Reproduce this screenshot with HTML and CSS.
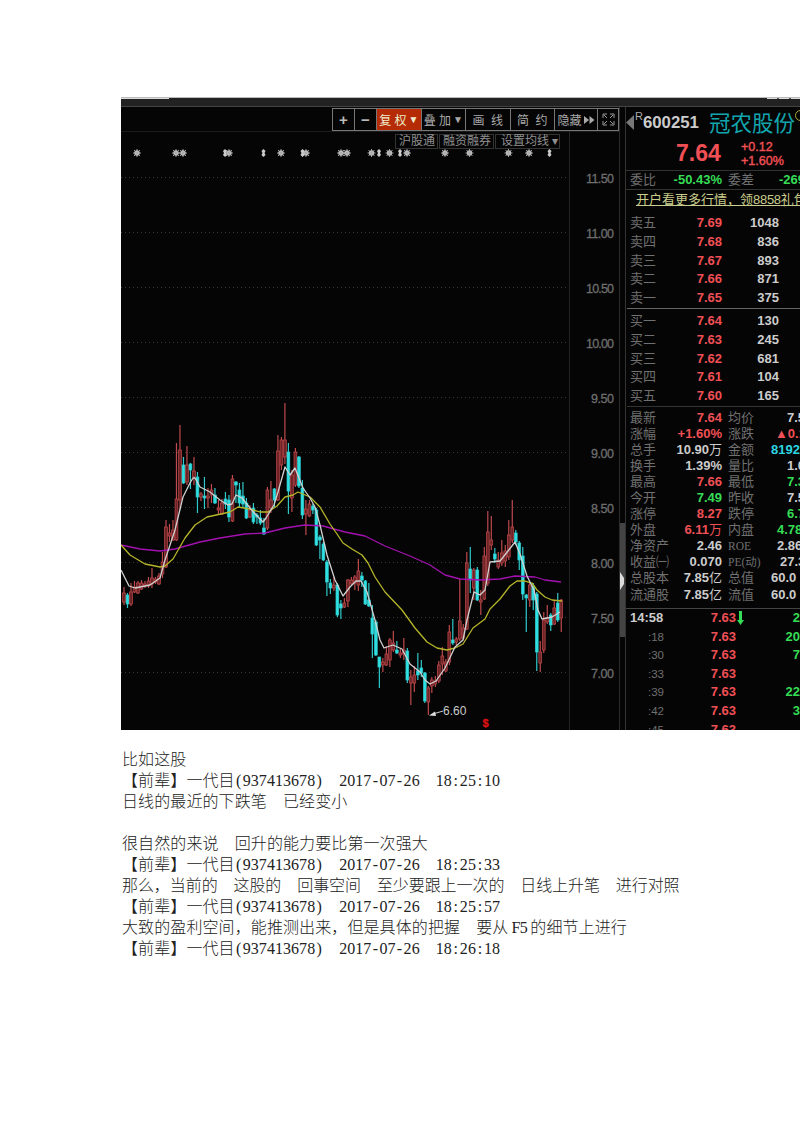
FILE: index.html
```html
<!DOCTYPE html>
<html lang="zh-CN">
	<head>
		<meta charset="utf-8">
		<title>600251 冠农股份</title>
		<link rel="stylesheet" href="styles.css">
	</head>
	<body>
		<div class="captura">
			<div class="barra"><span></span><b></b></div>
			<div class="contenido">
				<!-- grafico -->
				<div class="grafico">
					<div class="botones">
						<span class="b1">+</span><span class="b1">−</span><span class="b2 activo">复 权<i>▼</i></span><span class="b2">叠 加<i>▼</i></span><span class="b2">画&nbsp; 线</span><span class="b2">简&nbsp; 约</span><span class="b3">隐藏<svg width="11" height="8"><path d="M0 0L5 4L0 8zM5.500 0L10.500 4L5.500 8z" fill="#aaa"/></svg></span><span class="b4"><svg width="13" height="13"><path d="M1 5V1H5M8 1H12V5M12 8V12H8M5 12H1V8M2 2L5 5M11 2L8 5M11 11L8 8M2 11L5 8" fill="none" stroke="#999"/></svg></span>
					</div>
					<div class="etiquetas">
						<span>沪股通</span><span>融资融券</span><span class="medias">设置均线 <i>▾</i></span>
					</div>
					<svg id="velas" width="498" height="598" viewBox="121 132 498 598"></svg>
				</div>
				<div class="scroll"><div class="tirador"><svg width="5" height="18"><path d="M0 0L4 6V12L0 18z" fill="#ddd"/></svg></div></div>
				<!-- panel de cotizacion -->
				<div class="panel">
					<div class="titulo"><svg width="8" height="15"><path d="M8 0V15L0 7.500z" fill="#777"/></svg><sup>R</sup><b>600251</b><span>冠农股份</span><em></em></div>
					<div class="precio rojo"><b>7.64</b><div>+0.12<br>+1.60%</div></div>
					<div class="fila comision"><span>委比</span><b class="verde">-50.43%</b><span class="seg">委差</span><b class="verde libre">-269</b></div>
					<div class="anuncio">开户看更多行情，领<u>8858</u>礼包</div>
					<div class="ordenes">
						<div class="fila"><span>卖五</span><b class="rojo">7.69</b><b class="vol">1048</b></div>
						<div class="fila"><span>卖四</span><b class="rojo">7.68</b><b class="vol">836</b></div>
						<div class="fila"><span>卖三</span><b class="rojo">7.67</b><b class="vol">893</b></div>
						<div class="fila"><span>卖二</span><b class="rojo">7.66</b><b class="vol">871</b></div>
						<div class="fila"><span>卖一</span><b class="rojo">7.65</b><b class="vol">375</b></div>
					</div>
					<div class="ordenes compra">
						<div class="fila"><span>买一</span><b class="rojo">7.64</b><b class="vol">130</b></div>
						<div class="fila"><span>买二</span><b class="rojo">7.63</b><b class="vol">245</b></div>
						<div class="fila"><span>买三</span><b class="rojo">7.62</b><b class="vol">681</b></div>
						<div class="fila"><span>买四</span><b class="rojo">7.61</b><b class="vol">104</b></div>
						<div class="fila"><span>买五</span><b class="rojo">7.60</b><b class="vol">165</b></div>
					</div>
					<div class="datos">
						<div class="fila"><span>最新</span><b class="rojo">7.64</b><span class="seg">均价</span><b class="c4">7.5</b></div>
						<div class="fila"><span>涨幅</span><b class="rojo">+1.60%</b><span class="seg">涨跌</span><b class="rojo c1">▲0.1</b></div>
						<div class="fila"><span>总手</span><b>10.90<i>万</i></b><span class="seg">金额</span><b class="azul c2">8192</b></div>
						<div class="fila"><span>换手</span><b>1.39%</b><span class="seg">量比</span><b class="c4">1.0</b></div>
						<div class="fila"><span>最高</span><b class="rojo">7.66</b><span class="seg">最低</span><b class="verde c4">7.3</b></div>
						<div class="fila"><span>今开</span><b class="verde">7.49</b><span class="seg">昨收</span><b class="c4">7.5</b></div>
						<div class="fila"><span>涨停</span><b class="rojo">8.27</b><span class="seg">跌停</span><b class="verde c4">6.7</b></div>
						<div class="fila"><span>外盘</span><b class="rojo">6.11<i>万</i></b><span class="seg">内盘</span><b class="verde c3">4.78</b></div>
						<div class="fila"><span>净资产</span><b>2.46</b><span class="seg lat">ROE</span><b class="c3">2.86</b></div>
						<div class="fila"><span>收益㈠</span><b>0.070</b><span class="seg lat">PE(动)</span><b class="c5">27.3</b></div>
						<div class="fila"><span>总股本</span><b>7.85<i>亿</i></b><span class="seg">总值</span><b class="c2">60.0</b></div>
						<div class="fila"><span>流通股</span><b>7.85<i>亿</i></b><span class="seg">流值</span><b class="c2">60.0</b></div>
					</div>
					<div class="ticks">
						<div class="fila"><b class="hora">14:58</b><b class="rojo">7.63</b><svg width="7" height="14"><path d="M2 0H5V9H7L3.500 14L0 9H2z" fill="#3d5"/></svg><b class="verde num">2</b></div>
						<div class="fila"><span>:18</span><b class="rojo">7.63</b><b class="verde num">20</b></div>
						<div class="fila"><span>:30</span><b class="rojo">7.63</b><b class="verde num">7</b></div>
						<div class="fila"><span>:33</span><b class="rojo">7.63</b></div>
						<div class="fila"><span>:39</span><b class="rojo">7.63</b><b class="verde num">22</b></div>
						<div class="fila"><span>:42</span><b class="rojo">7.63</b><b class="verde num">3</b></div>
						<div class="fila"><span>:45</span><b class="rojo">7.63</b></div>
					</div>
				</div>
			</div>
		</div>
		<!-- conversacion -->
		<div class="chat">
			<p>比如这股</p>
			<p class="autor">【前辈】一代目<u>(937413678)</u><u>2017-07-26</u><u>18:25:10</u></p>
			<p>日线的最近的下跌笔　已经变小</p>
			<p>&nbsp;</p>
			<p>很自然的来说　回升的能力要比第一次强大</p>
			<p class="autor">【前辈】一代目<u>(937413678)</u><u>2017-07-26</u><u>18:25:33</u></p>
			<p class="larga">那么，当前的　这股的　回事空间　至少要跟上一次的　日线上升笔　进行对照</p>
			<p class="autor">【前辈】一代目<u>(937413678)</u><u>2017-07-26</u><u>18:25:57</u></p>
			<p>大致的盈利空间，能推测出来，但是具体的把握　要从<u class="f5">F5</u>的细节上进行</p>
			<p class="autor">【前辈】一代目<u>(937413678)</u><u>2017-07-26</u><u>18:26:18</u></p>
		</div>
		<script src="script.js"></script>
	</body>
</html>
```
FILE: styles.css
```css
* {
	margin: 0;
	padding: 0;
	box-sizing: border-box;
}
body {
	background-color: white;
	padding: 97px 0 0 121px;
	width: 800px;
	overflow-x: hidden;
	font-family: "Liberation Sans", "Noto Sans CJK SC", sans-serif;
}
i, em, u {
	font-style: normal;
	text-decoration: none;
}
svg {
	display: block;
	flex: none;
}

.captura {
	width: 679px;
	height: 633px;
	background-color: #050505;
	overflow: hidden;
}
.barra {
	height: 10px;
	background-color: #222;
	border-top: 1px solid #bbb;
	border-bottom: 1px solid #444;
	display: flex;
	justify-content: space-between;
}
.barra span {
	width: 48px;
	height: 1px;
	background-color: #ddd;
}
.barra b {
	width: 33px;
	height: 1px;
	background: repeating-linear-gradient(to right, #ddd 0 10px, #555 10px 12px);
}
.contenido {
	display: flex;
	height: 623px;
}

/*grafico*/
.grafico {
	width: 499px;
	border-right: 1px solid #2c2c2c;
	flex: none;
}
.botones {
	display: flex;
	margin-left: 211px;
	margin-top: 1px;
	width: 287px;
	height: 23px;
	border: 1px solid #777;
	color: #aaa;
	font-size: 12px;
}
.botones span {
	display: flex;
	align-items: center;
	justify-content: center;
	border-right: 1px solid #777;
	white-space: nowrap;
}
.botones .b1 {
	width: 22px;
	font-size: 15px;
	font-weight: bold;
	color: #bbb;
}
.botones .b2 {
	width: 44.500px;
}
.botones .b2 i {
	font-size: 10px;
	margin-left: 2px;
}
.botones .activo {
	background-color: #b52b05;
	color: #eec;
}
.botones .b3 {
	width: 43px;
}
.botones .b3 svg {
	margin-left: 2px;
}
.botones .b4 {
	flex: 1;
	border-right: 0;
}
.etiquetas {
	display: flex;
	gap: 1px;
	border-top: 1px solid #1b1b1b;
	padding: 2px 0 0 274px;
	height: 17px;
	color: #909090;
	font-size: 12px;
	line-height: 13px;
}
.etiquetas span {
	border: 1px solid #333;
	padding: 0 2px 0 3px;
	height: 15px;
	white-space: nowrap;
}
.etiquetas .medias {
	padding: 0 1px 0 5px;
}
#velas {
	margin-top: -16px;
}
#velas text {
	font-size: 12.500px;
	fill: #6e6e6e;
	stroke: #6e6e6e;
	stroke-width: 0.300px;
}
#velas .minimo {
	font-size: 12px;
	fill: #ccc;
	stroke: none;
}
#velas .marca {
	font-size: 11px;
	font-weight: bold;
	fill: #d11;
	stroke: #d11;
}
.scroll {
	width: 6px;
	padding-top: 416px;
	border-right: 1px solid #333;
	flex: none;
}
.tirador {
	height: 114px;
	background-color: #444;
	padding-top: 49px;
}

/*panel*/
.panel {
	width: 174px;
	flex: none;
	overflow: hidden;
	font-size: 13px;
	color: #ccc;
}
.rojo {
	color: #f05055;
}
.verde {
	color: #35dd55;
}
.azul {
	color: #2bd5e0;
}
.titulo {
	display: flex;
	align-items: center;
	height: 31px;
	white-space: nowrap;
}
.titulo sup {
	font-size: 11px;
	line-height: 11px;
	margin: -13px 0 0 1px;
	color: #aaa;
}
.titulo b {
	font-size: 16.800px;
	width: 66px;
	flex: none;
}
.titulo span {
	flex: none;
	font-size: 21.500px;
	line-height: 34px;
	height: 31px;
	color: #12a5ae;
}
.titulo em {
	flex: none;
	width: 11px;
	height: 11px;
	border: 1px solid #aa3;
	border-radius: 50%;
	margin: -15px 0 0 0;
}
.precio {
	display: flex;
	height: 32px;
	padding-left: 50px;
	align-items: center;
}
.precio b {
	font-size: 23px;
	line-height: 30px;
	height: 32px;
	width: 65px;
}
.precio div {
	font-size: 12.500px;
	line-height: 14px;
	-webkit-text-stroke: 0.400px;
}
.fila {
	display: flex;
	align-items: baseline;
	padding-left: 4px;
	white-space: nowrap;
}
.fila span {
	color: #707070;
	width: 42px;
	flex: none;
}
.fila b {
	width: 50px;
	flex: none;
	text-align: right;
}
.fila b i {
	font-weight: normal;
}
.fila .seg {
	margin-left: 6px;
	width: 40px;
}
.fila .lat {
	font-family: "Liberation Serif", "Noto Sans CJK SC", serif;
	font-size: 11.500px;
}
.fila .vol {
	width: 57px;
}
.comision {
	height: 20px;
	line-height: 18px;
	border-top: 1px solid #333;
	border-bottom: 1px solid #333;
}
.comision .libre {
	width: auto;
	margin-left: 11px;
}
.anuncio {
	height: 23px;
	line-height: 19px;
	margin-left: 10px;
	color: #c9cc8c;
	text-decoration: underline;
	white-space: nowrap;
}
.anuncio u {
	letter-spacing: -0.300px;
}
.ordenes {
	height: 96px;
	margin-left: 1px;
	padding-top: 1px;
	border-bottom: 1px solid #666;
}
.ordenes .fila {
	height: 18.800px;
	line-height: 18.800px;
	padding-left: 3px;
}
.compra {
	height: 98px;
	padding-top: 3px;
	border-color: #333;
}
.datos {
	height: 202px;
	padding-top: 3px;
	border-bottom: 1px solid #444;
}
.datos .fila {
	height: 16.050px;
	line-height: 16.050px;
}
.datos .fila b + .seg + b {
	width: auto;
}
.datos .c4 {
	margin-left: 19px;
}
.datos .c1 {
	margin-left: 7px;
}
.datos .c2 {
	margin-left: 3px;
}
.datos .c3 {
	margin-left: 9px;
}
.datos .c5 {
	margin-left: 12px;
}
.ticks .fila {
	height: 18.600px;
	line-height: 17.500px;
}
.ticks span {
	width: 34px;
	text-align: right;
	font-size: 11.500px;
}
.ticks .hora {
	width: 34px;
	text-align: left;
}
.ticks .fila .rojo {
	width: 72px;
}
.ticks svg {
	margin: 2px -8px 0 1px;
	align-self: flex-start;
}
.ticks .num {
	width: 64px;
}

/*conversacion*/
.chat {
	padding: 20px 0 0 1px;
	font-family: "Liberation Serif", "Noto Sans CJK SC", serif;
	font-size: 16px;
	color: #222;
	font-weight: 300;
	letter-spacing: 0.100px;
}
.chat p {
	height: 21px;
	line-height: 20px;
	white-space: nowrap;
}
.chat .larga {
	letter-spacing: -0.070px;
}
.chat .autor {
	display: flex;
}
.chat .autor u {
	display: flex;
	margin-right: 16px;
}
.chat .autor u s {
	width: 8.050px;
	text-align: center;
	text-decoration: none;
}
.chat .f5 {
	margin: 0 3px;
	letter-spacing: -0.500px;
}
```
FILE: script.js
```js
//velas: [maximo, cuerpo arriba, cuerpo abajo, minimo, sube]
var velas = [
[587,593,602,605,1],[593,595,604,608,0],[583,592,604,606,1],[581,587,592,593,1],[581,583,593,594,1],
[580,583,589,590,1],[581,584,586,588,1],[577,581,586,588,1],[568,578,584,588,1],[577,579,582,584,1],
[573,576,584,585,1],[552,562,574,578,1],[520,527,567,568,1],[524,533,536,542,1],[520,530,540,541,1],
[443,499,540,541,1],[425,450,500,510,1],[457,465,483,484,0],[446,465,482,485,1],[463,464,470,489,0],
[457,471,477,485,1],[472,477,497,513,0],[492,494,497,501,1],[477,496,498,509,0],[488,496,498,508,1],
[484,490,495,503,1],[488,495,503,504,0],[500,508,510,515,1],[499,503,514,515,1],[492,499,504,509,0],
[495,500,517,522,0],[475,479,521,522,1],[481,482,485,503,0],[483,490,503,507,0],[482,496,504,508,0],
[498,503,518,519,0],[505,510,517,518,1],[503,508,522,524,0],[513,515,517,524,0],[510,518,523,525,0],
[518,528,534,535,0],[487,490,528,530,1],[481,500,508,513,1],[488,489,500,507,0],[435,451,500,501,1],
[437,440,465,470,1],[403,440,457,464,1],[443,452,491,514,0],[470,475,498,512,1],[448,452,485,487,1],
[456,457,486,488,0],[480,488,515,519,0],[500,509,514,535,1],[500,504,516,517,1],[504,506,510,514,0],
[508,510,545,546,0],[535,537,540,559,0],[542,544,560,561,0],[560,562,582,596,0],[579,583,588,594,0],
[577,585,588,591,1],[583,585,615,617,0],[600,604,608,619,0],[598,603,607,608,1],[579,580,601,607,1],
[577,580,584,585,1],[575,577,583,590,1],[559,571,585,591,1],[572,576,580,587,0],[580,581,604,605,0],
[583,600,606,607,0],[605,618,634,658,0],[620,622,655,656,0],[657,657,667,688,0],[658,662,665,672,1],
[646,654,665,666,1],[638,640,660,667,1],[631,643,650,652,1],[641,650,653,654,0],[648,653,655,658,1],
[638,650,654,660,1],[648,651,680,683,0],[670,677,683,705,1],[666,675,683,692,1],[653,671,675,680,0],
[660,668,673,677,0],[672,673,701,703,0],[686,688,702,715,1],[677,680,686,693,1],[676,681,684,687,1],
[661,665,681,683,1],[647,656,664,675,1],[659,662,671,672,1],[625,632,662,665,1],[619,640,643,645,0],
[637,639,642,645,1],[579,621,639,641,1],[624,628,638,640,1],[552,563,629,630,1],[547,569,580,593,0],
[568,570,588,600,1],[567,570,600,601,0],[590,600,602,615,1],[547,556,599,600,1],[511,532,583,586,1],
[516,540,545,550,1],[548,554,559,563,0],[552,560,567,569,1],[540,553,563,566,1],[545,551,561,567,1],
[520,535,557,560,1],[500,527,540,543,1],[530,533,542,545,0],[541,543,560,570,0],[547,556,594,600,0],
[594,595,598,632,0],[582,585,600,607,1],[583,586,600,610,0],[592,594,652,671,0],[641,652,663,672,1],
[612,620,650,653,1],[605,618,622,624,1],[613,615,625,631,0],[600,608,624,625,1],[593,603,620,622,0],
[599,600,618,632,1]
];
var s = "";

//rejilla y precios del eje
for (var i = 0; i < 10; i++) {
	var y = 177.5 + i * 55;
	s += '<path d="M121 ' + y + 'H571" stroke="#3a3a3a" stroke-dasharray="1 3"/>';
	s += '<text x="614" y="' + (y + 5) + '" text-anchor="end" textLength="' + (i < 4 ? 28 : 23) + '">' + (11.5 - i * 0.5).toFixed(2) + '</text>';
}
s += '<path d="M569.5 132V730" stroke="#242424"/>';

//asteriscos de eventos
[137,176,183,229,281,306,341,347,371.5,389.5,407,445,469.5,508.5,529].forEach(function(x) {
	s += '<circle cx="' + x + '" cy="153" r="2.7" fill="#ccc"/>';
	s += '<path d="M' + (x - 4) + ' 153h8M' + x + ' 149v8M' + (x - 3) + ' 150l6 6M' + (x - 3) + ' 156l6 -6" stroke="#aaa" stroke-width="0.9"/>';
});
[225,263.5,302.5,379,400,549.5].forEach(function(x) {
	s += '<path d="M' + (x - 2) + ' 151l2 -2l2 2l-1 2l1 2l-2 2l-2 -2l1 -2z" fill="#ccc"/>';
});

for (i = 0; i < velas.length; i++) {
	var v = velas[i];
	var x = 124 + i * 3.498;
	var c = v[4] ? "#c04a4d" : "#2fc9cb";
	s += '<path d="M' + x + ' ' + v[0] + 'V' + v[3] + '" stroke="' + c + '" stroke-width="1.2"/>';
	s += '<rect x="' + (x - 1.4) + '" y="' + v[1] + '" width="2.8" height="' + Math.max(v[2] - v[1], 1) + '" fill="' + (v[4] ? "#6e2427" : "#2fe0e2") + '" stroke="' + c + '" stroke-width="0.7"/>';
}

//medias moviles
function linea(puntos, color) {
	s += '<polyline points="' + puntos + '" fill="none" stroke="' + color + '" stroke-width="1.3" stroke-linejoin="round"/>';
}
linea("121,545 140,549 160,551 175,549 200,542 220,538 245,534 265,533 285,528 305,525 323,526 345,532 365,536 385,546 410,556 430,565 445,575 460,579 480,580 500,579 515,576 535,577 545,580 561,582", "#a311b0");
linea("121,545 130,555 145,564 160,567 165,566 173,559 185,538 195,525 207,517 230,512 238,507 250,509 260,512 268,512 277,506 285,497 293,495 298,492 310,497 320,507 330,524 337,534 343,543 352,549 362,555 368,563 375,577 385,592 402,610 415,628 427,642 437,648 447,650 455,648 463,644 473,628 485,619 490,609 500,599 510,586 517,581 525,581 532,583 537,590 545,597 552,600 562,601", "#b5b52a");
linea("121,570 126,580 129,586 135,588 150,585 160,578 165,560 175,530 183,497 190,483 193,478 195,478 200,487 210,492 220,500 228,505 232,504 236,495 242,498 250,508 258,517 263,522 266,518 274,505 278,492 285,467 290,475 295,468 299,478 303,488 310,498 315,507 320,525 327,555 335,580 343,596 350,587 356,581 361,581 367,592 375,620 380,640 384,648 393,645 402,649 410,664 420,672 425,680 430,684 436,681 445,668 455,647 463,640 467,620 474,592 480,595 485,590 490,562 500,561 508,551 515,542 520,554 527,576 534,590 538,610 542,619 552,617 560,612", "#d0d0d0");

s += '<path d="M433 714L443 711" stroke="#ccc"/><path d="M429 715.500L435 711.500L436 716z" fill="#ddd"/>';
s += '<text class="minimo" x="443" y="715">6.60</text>';
s += '<text class="marca" x="482.500" y="727">$</text>';
document.getElementById("velas").innerHTML = s;

//cada caracter ocupa media celda
document.querySelectorAll(".autor u").forEach(function(u) {
	u.innerHTML = u.textContent.split("").map(function(l) { return "<s>" + l + "</s>"; }).join("");
});
```
